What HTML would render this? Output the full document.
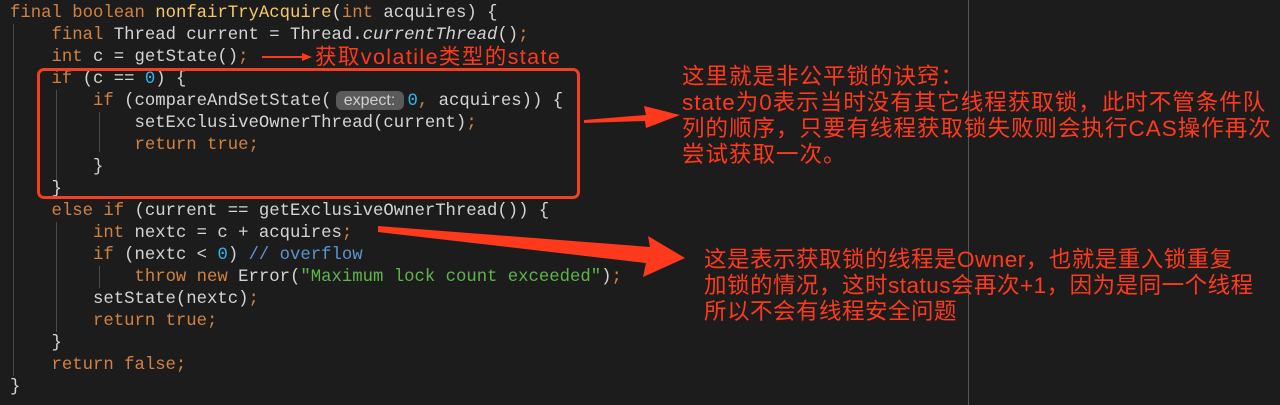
<!DOCTYPE html>
<html><head><meta charset="utf-8"><style>
html,body{margin:0;padding:0;background:#1c1c1d;width:1280px;height:405px;overflow:hidden;position:relative}
.code{position:absolute;left:10px;top:3px;font-family:"Liberation Mono",monospace;font-size:17.3px;line-height:22px;color:#d4d4d4;white-space:pre;margin:0}
.k{color:#d2823f}.f{color:#f5c86a}.n{color:#2bb8f0}.c{color:#5b93cf}.s{color:#5fb44a}.i{font-style:italic}
.hint{display:inline-block;width:68px;text-align:center;line-height:19px;background:#5a5a5a;color:#cfcfcf;font-family:"Liberation Sans",sans-serif;font-size:16px;border-radius:6px;margin:0 4px 0 4px}
.g{position:absolute;width:1px;background:#4a4a4a}
.note{position:absolute;color:#ff3a1c;font-family:"Liberation Sans","Noto Sans CJK SC",sans-serif;font-size:22.5px;letter-spacing:1px;line-height:26px;white-space:pre}
</style></head><body>
<div class="g" style="left:968px;top:0;height:405px;background:#555"></div>
<div class="g" style="left:13px;top:24px;height:352px"></div>
<div class="g" style="left:56px;top:90px;height:106px"></div>
<div class="g" style="left:99px;top:112px;height:40px"></div>
<div class="g" style="left:56px;top:222px;height:110px"></div>
<div class="g" style="left:99px;top:266px;height:22px"></div>
<pre class="code"><span class="k">final boolean</span> <span class="f">nonfairTryAcquire</span>(<span class="k">int</span> acquires) {
    <span class="k">final</span> Thread current = Thread.<span class="i">currentThread</span>()<span class="k">;</span>
    <span class="k">int</span> c = getState()<span class="k">;</span>
    <span class="k">if</span> (c == <span class="n">0</span>) {
        <span class="k">if</span> (compareAndSetState(<span class="hint">expect:</span><span class="n">0</span><span class="k">,</span> acquires)) {
            setExclusiveOwnerThread(current)<span class="k">;</span>
            <span class="k">return true;</span>
        }
    }
    <span class="k">else if</span> (current == getExclusiveOwnerThread()) {
        <span class="k">int</span> nextc = c + acquires<span class="k">;</span>
        <span class="k">if</span> (nextc &lt; <span class="n">0</span>) <span class="c">// overflow</span>
            <span class="k">throw new</span> Error(<span class="s">"Maximum lock count exceeded"</span>)<span class="k">;</span>
        setState(nextc)<span class="k">;</span>
        <span class="k">return true;</span>
    }
    <span class="k">return false;</span>
}</pre>
<div style="position:absolute;left:37px;top:68px;width:537px;height:125px;border:3px solid #f0401f;border-radius:7px"></div>
<svg width="1280" height="405" style="position:absolute;left:0;top:0">
<line x1="262" y1="57" x2="304" y2="57" stroke="#ff3a1c" stroke-width="2"/>
<polygon points="302,53 312,57 302,61" fill="#ff3a1c"/>
<polygon points="584,120 646,115 644,106 680,115 646,128 645,121 584,123" fill="#ff3a1c"/>
<polygon points="378,226 650,247 648,236 685,258 643,277 646,263 378,232" fill="#ff3a1c"/>
</svg>
<div class="note" style="left:315px;top:44px;font-size:21.5px;letter-spacing:1.4px">获取volatile类型的state</div>
<div class="note" style="left:682px;top:64px">这里就是非公平锁的诀窍：
state为0表示当时没有其它线程获取锁，此时不管条件队
列的顺序，只要有线程获取锁失败则会执行CAS操作再次
尝试获取一次。</div>
<div class="note" style="left:704px;top:247px;letter-spacing:0.5px">这是表示获取锁的线程是Owner，也就是重入锁重复
加锁的情况，这时status会再次+1，因为是同一个线程
所以不会有线程安全问题</div>
</body></html>
